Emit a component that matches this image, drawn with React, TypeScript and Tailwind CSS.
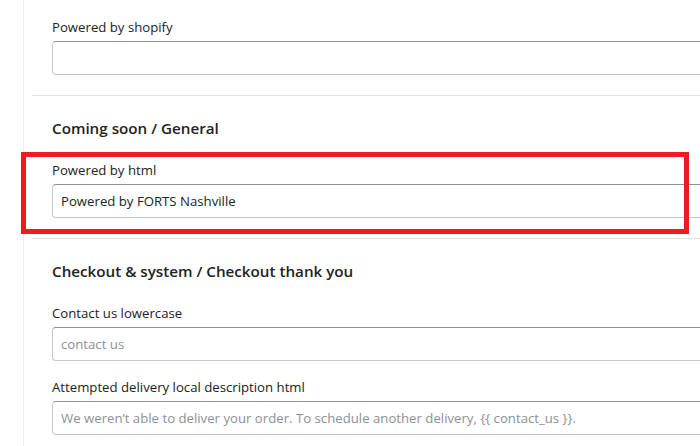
import React from 'react';

const font = { fontFamily: '"Segoe UI", "Open Sans", "Noto Sans", sans-serif' };

type FieldProps = { label: string; value?: string; placeholder?: string };

const Field: React.FC<FieldProps> = ({ label, value, placeholder }) => (
  <div className="flex flex-col gap-1">
    <label className="text-[13.2px] leading-5 text-[#202223]">{label}</label>
    <input
      readOnly
      value={value ?? ''}
      placeholder={placeholder}
      className="h-[34px] w-full rounded-[4px] border border-[#c4c7ca] border-t-[#8d9196] bg-white px-2 text-[13.2px] text-[#202223] placeholder:text-[#8c9196] outline-none"
    />
  </div>
);

const App: React.FC = () => {
  return (
    <div className="relative h-[446px] w-[700px] overflow-hidden bg-white" style={font}>
      <div className="flex h-full">
        <div className="w-[23px] shrink-0" />
        <div className="flex-1 border-l border-[#eeeeee] pl-[8px]">
          <div className="w-[760px]">
            <section className="px-5 pt-[17px] pb-5">
              <Field label="Powered by shopify" />
            </section>

            <section className="border-t border-[#e1e3e5] px-5 pt-5 pb-5">
              <h2 className="text-[15.2px] font-semibold leading-6 text-[#202223]">Coming soon / General</h2>
              <div className="mt-5">
                <Field label="Powered by html" value="Powered by FORTS Nashville" />
              </div>
            </section>

            <section className="border-t border-[#e1e3e5] px-5 pt-5 pb-5">
              <h2 className="text-[15.2px] font-semibold leading-6 text-[#202223]">
                Checkout &amp; system / Checkout thank you
              </h2>
              <div className="mt-5 flex flex-col gap-4">
                <Field label="Contact us lowercase" placeholder="contact us" />
                <Field
                  label="Attempted delivery local description html"
                  placeholder="We weren’t able to deliver your order. To schedule another delivery, {{ contact_us }}."
                />
              </div>
            </section>
          </div>
        </div>
      </div>

      <div className="pointer-events-none absolute left-[21px] top-[152px] h-[82px] w-[668px] border-[5px] border-[#ed1c24]" />
    </div>
  );
};

export default App;
